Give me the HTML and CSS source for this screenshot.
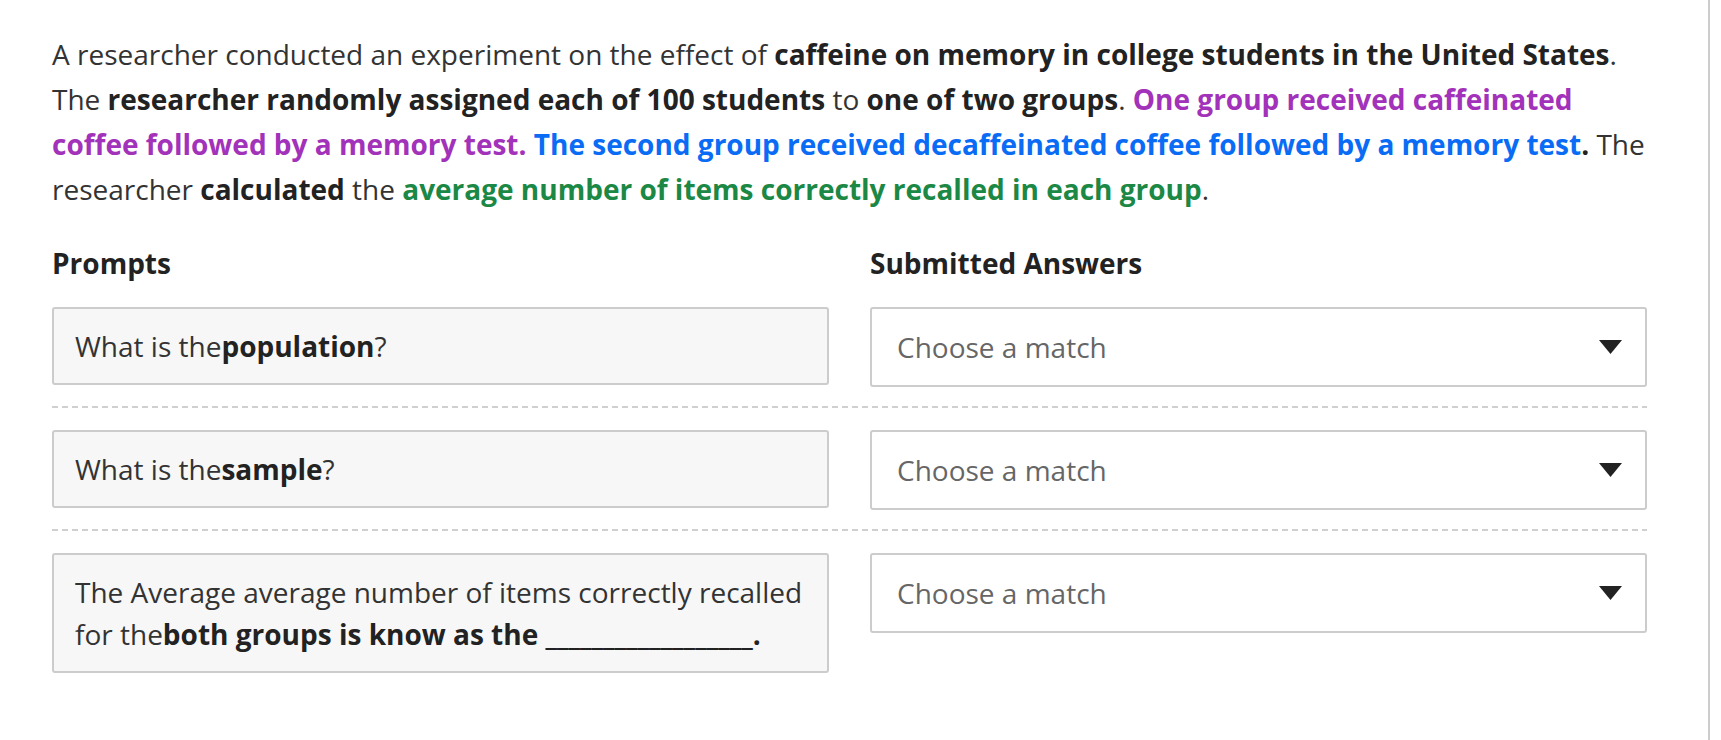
FILE: index.html
```html
<!DOCTYPE html>
<html lang="en">
<head>
<meta charset="utf-8">
<title>Matching question</title>
<link rel="stylesheet" href="styles.css">
</head>
<body>
<div class="page">
  <p class="stem">A researcher conducted an experiment on the effect of <b>caffeine on memory in college students in the United States</b>. The <b>researcher randomly assigned each of 100 students</b> to <b>one of two groups</b>. <b class="purple">One group received caffeinated coffee followed by a memory test.</b> <b class="blue">The second group received decaffeinated coffee followed by a memory test</b><b>.</b> The researcher <b>calculated</b> the <b class="green">average number of items correctly recalled in each group</b>.</p>

  <div class="match">
    <div class="heads">
      <div class="head">Prompts</div>
      <div class="head">Submitted Answers</div>
    </div>

    <div class="row">
      <div class="prompt">What is the<b>population</b>?</div>
      <div class="select">
        <span class="placeholder">Choose a match</span>
        <svg class="caret" width="23" height="14" viewBox="0 0 23 14"><path d="M0 0H23L11.5 14Z" fill="#222"/></svg>
      </div>
    </div>

    <div class="row">
      <div class="prompt">What is the<b>sample</b>?</div>
      <div class="select">
        <span class="placeholder">Choose a match</span>
        <svg class="caret" width="23" height="14" viewBox="0 0 23 14"><path d="M0 0H23L11.5 14Z" fill="#222"/></svg>
      </div>
    </div>

    <div class="row last">
      <div class="prompt">The Average average number of items correctly recalled for the<b>both groups is know as the __________________.</b></div>
      <div class="select">
        <span class="placeholder">Choose a match</span>
        <svg class="caret" width="23" height="14" viewBox="0 0 23 14"><path d="M0 0H23L11.5 14Z" fill="#222"/></svg>
      </div>
    </div>
  </div>
</div>
</body>
</html>
```

FILE: styles.css
```css
* { box-sizing: border-box; }
html, body { margin: 0; padding: 0; background: #fff; }
body {
  font-family: "Open Sans", "Noto Sans", sans-serif;
  color: #333;
  overflow: hidden;
}
.page {
  width: 1710px;
  min-height: 740px;
  border-right: 2px solid #cccccc;
  padding: 32px 61px 0 52px;
}
.stem {
  margin: 0;
  font-size: 28px;
  line-height: 45px;
  color: #333;
}
.stem b { font-weight: 700; color: #222; }
.stem b.purple { color: #a232b9; }
.stem b.blue { color: #0a6cf5; }
.stem b.green { color: #1b8845; }

.match { margin-top: 29px; }
.heads {
  display: grid;
  grid-template-columns: 777px 777px;
  column-gap: 41px;
  margin-bottom: 21px;
}
.head {
  font-size: 28px;
  line-height: 45px;
  font-weight: 700;
  color: #222;
}
.row {
  display: grid;
  grid-template-columns: 777px 777px;
  column-gap: 41px;
  align-items: start;
  padding-bottom: 21px;
  margin-bottom: 22px;
  background-image: repeating-linear-gradient(to right, #d0d0d0 0 6px, transparent 6px 10px);
  background-size: 100% 2px;
  background-position: left bottom;
  background-repeat: no-repeat;
}
.row.last { background-image: none; }
.prompt {
  background: #f7f7f7;
  border: 2px solid #cccccc;
  border-radius: 3px;
  padding: 16px 21px;
  font-size: 28px;
  line-height: 42px;
  color: #333;
}
.prompt b { font-weight: 700; color: #222; }
.select {
  display: flex;
  align-items: center;
  justify-content: space-between;
  background: #fff;
  border: 2px solid #cccccc;
  border-radius: 3px;
  padding: 17px 23px 17px 25px;
  font-size: 28px;
  line-height: 42px;
}
.placeholder { color: #666; }
.caret { display: block; }
```
